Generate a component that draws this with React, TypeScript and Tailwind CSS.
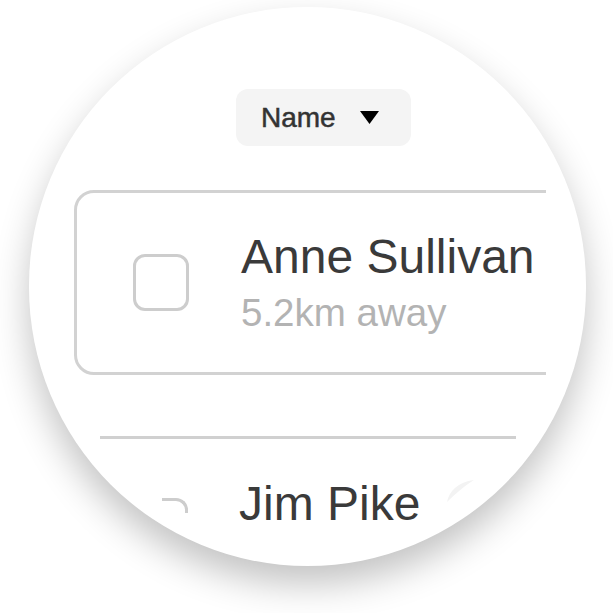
import { useState } from 'react';

const font = { fontFamily: '"Liberation Sans", Arial, sans-serif' };

export default function App() {
    const [checked, setChecked] = useState(false);

    return (
        <div className="w-[613px] h-[613px] bg-white flex justify-center pt-[7px]" style={font}>
            <div className="relative ml-[2px] w-[557px] h-[559px] rounded-full bg-white overflow-hidden shadow-[0_18px_36px_rgba(0,0,0,0.24)]">
                <div className="flex flex-col pt-[82px]">
                    {/* sort dropdown */}
                    <div className="pl-[207px]">
                        <button className="flex items-center w-[175px] h-[57px] pl-[25px] rounded-[12px] bg-[#f4f4f4] text-[28px] leading-none text-[#333] [-webkit-text-stroke:0.5px_#333]">
                            <span>Name</span>
                            <svg className="ml-[24px]" width="19" height="13" viewBox="0 0 19 13">
                                <polygon points="0,0 19,0 9.5,13" fill="#000" />
                            </svg>
                        </button>
                    </div>

                    {/* selected person card */}
                    <div className="mt-[44px] ml-[45px] w-[472px] overflow-hidden">
                        <div className="flex items-center w-[540px] h-[185px] pl-[56px] border-[3px] border-[#d2d2d2] rounded-[20px]">
                            <button
                                onClick={() => setChecked(!checked)}
                                className="w-[56px] h-[57px] shrink-0 rounded-[12px] border-[3px] border-[#cdcdcd]"
                            />
                            <div className="ml-[52px] flex flex-col">
                                <span className="text-[48px] leading-none text-[#3a3a3a]">Anne Sullivan</span>
                                <span className="mt-[13px] text-[38.5px] leading-none text-[#b3b3b3]">5.2km away</span>
                            </div>
                        </div>
                    </div>

                    <div className="mt-[61px] ml-[71px] w-[416px] h-[3px] bg-[#d0d0d0]" />

                    {/* next row, cut by the lens */}
                    <div className="mt-[41px] flex items-start pl-[133px]">
                        <div className="mt-[18px] w-[26px] h-[15px] border-t-[3px] border-r-[3px] border-[#cdcdcd] rounded-tr-[12px]" />
                        <span className="ml-[51px] text-[48px] leading-none text-[#3a3a3a]">Jim Pike</span>
                    </div>
                </div>

                <svg className="absolute left-[417px] top-[472px]" width="30" height="24" viewBox="0 0 30 24">
                    <path d="M1 23 C3 12 12 3 28 1 C20 6 10 14 1 23 Z" fill="#f3f3f3" />
                </svg>
            </div>
        </div>
    );
}
